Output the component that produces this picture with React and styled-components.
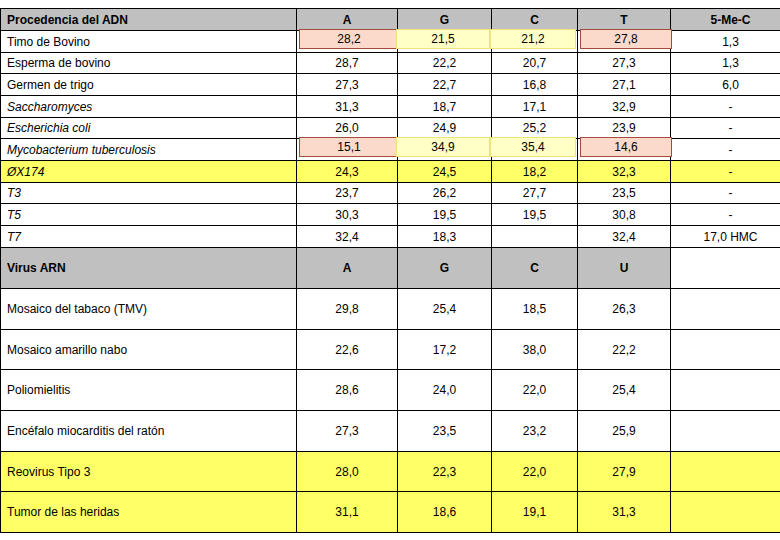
import React from 'react';
import styled, { createGlobalStyle } from 'styled-components';

const Global = createGlobalStyle`
  html, body {
    margin: 0;
    padding: 0;
    background: #fff;
    overflow: hidden;
  }
  body {
    font-family: "Liberation Sans", Arial, sans-serif;
    font-size: 12px;
    color: #000;
  }
`;

const COLS = '296px 101px 94px 86px 93px 120px';

const Sheet = styled.div`
  margin-top: 8px;
  width: 790px;
  border-top: 1px solid #000;
  border-left: 1px solid #000;
`;

const Row = styled.div`
  display: grid;
  grid-template-columns: ${COLS};
  height: ${p => p.$h}px;
  background: ${p => (p.$yellow ? '#ffff66' : '#fff')};
`;

const Cell = styled.div`
  box-sizing: border-box;
  display: flex;
  align-items: center;
  justify-content: ${p => (p.$left ? 'flex-start' : 'center')};
  padding-left: ${p => (p.$left ? '6px' : '0')};
  border-right: 1px solid #000;
  border-bottom: 1px solid #000;
  background: ${p => (p.$head ? '#c0c0c0' : 'transparent')};
  font-weight: ${p => (p.$head ? 700 : 400)};
  font-style: ${p => (p.$italic ? 'italic' : 'normal')};
  white-space: nowrap;
  overflow: visible;
`;

const MarkCell = styled(Cell)`
  align-items: stretch;
  padding: 0;
`;

// highlight boxes drawn over the cell, like shapes pasted on a slide
const Mark = styled.div`
  flex: 1;
  display: flex;
  align-items: center;
  justify-content: center;
  margin: -2px ${p => (p.$tone === 'pink' ? -2 : 1)}px 3px ${p => (p.$tone === 'pink' ? 2 : -2)}px;
  position: relative;
  border: 1px solid ${p => (p.$tone === 'pink' ? '#a64a3c' : '#eee27a')};
  background: ${p => (p.$tone === 'pink' ? '#fcdacb' : '#ffffc6')};
`;

const dna = [
  { name: 'Timo de Bovino', v: ['28,2', '21,5', '21,2', '27,8', '1,3'], marks: true },
  { name: 'Esperma de bovino', v: ['28,7', '22,2', '20,7', '27,3', '1,3'] },
  { name: 'Germen de trigo', v: ['27,3', '22,7', '16,8', '27,1', '6,0'] },
  { name: 'Saccharomyces', v: ['31,3', '18,7', '17,1', '32,9', '-'], italic: true },
  { name: 'Escherichia coli', v: ['26,0', '24,9', '25,2', '23,9', '-'], italic: true },
  { name: 'Mycobacterium tuberculosis', v: ['15,1', '34,9', '35,4', '14,6', '-'], italic: true, marks: true },
  { name: 'ØX174', v: ['24,3', '24,5', '18,2', '32,3', '-'], italic: true, yellow: true },
  { name: 'T3', v: ['23,7', '26,2', '27,7', '23,5', '-'], italic: true },
  { name: 'T5', v: ['30,3', '19,5', '19,5', '30,8', '-'], italic: true },
  { name: 'T7', v: ['32,4', '18,3', '', '32,4', '17,0 HMC'], italic: true },
];
const dnaHeights = [22, 21, 22, 22, 21, 22, 22, 21, 22, 22];

const rna = [
  { name: 'Mosaico del tabaco (TMV)', v: ['29,8', '25,4', '18,5', '26,3'] },
  { name: 'Mosaico amarillo nabo', v: ['22,6', '17,2', '38,0', '22,2'] },
  { name: 'Poliomielitis', v: ['28,6', '24,0', '22,0', '25,4'] },
  { name: 'Encéfalo miocarditis del ratón', v: ['27,3', '23,5', '23,2', '25,9'] },
  { name: 'Reovirus Tipo 3', v: ['28,0', '22,3', '22,0', '27,9'], yellow: true },
  { name: 'Tumor de las heridas', v: ['31,1', '18,6', '19,1', '31,3'], yellow: true },
];
const rnaHeights = [41, 40, 41, 41, 40, 41];

const markTones = ['pink', 'yellow', 'yellow', 'pink'];

export default function App() {
  return (
    <>
      <Global />
      <Sheet>
        <Row $h={22}>
          <Cell $head $left>Procedencia del ADN</Cell>
          {['A', 'G', 'C', 'T', '5-Me-C'].map(h => <Cell $head key={h}>{h}</Cell>)}
        </Row>
        {dna.map((r, i) => (
          <Row key={r.name} $h={dnaHeights[i]} $yellow={r.yellow}>
            <Cell $left $italic={r.italic}>{r.name}</Cell>
            {r.v.map((val, j) =>
              r.marks && j < 4 ? (
                <MarkCell key={j}>
                  <Mark $tone={markTones[j]}>{val}</Mark>
                </MarkCell>
              ) : (
                <Cell key={j}>{val}</Cell>
              )
            )}
          </Row>
        ))}
        <Row $h={41}>
          <Cell $head $left>Virus ARN</Cell>
          {['A', 'G', 'C', 'U'].map(h => <Cell $head key={h}>{h}</Cell>)}
          <Cell />
        </Row>
        {rna.map((r, i) => (
          <Row key={r.name} $h={rnaHeights[i]} $yellow={r.yellow}>
            <Cell $left>{r.name}</Cell>
            {r.v.map((val, j) => <Cell key={j}>{val}</Cell>)}
            <Cell />
          </Row>
        ))}
      </Sheet>
    </>
  );
}
